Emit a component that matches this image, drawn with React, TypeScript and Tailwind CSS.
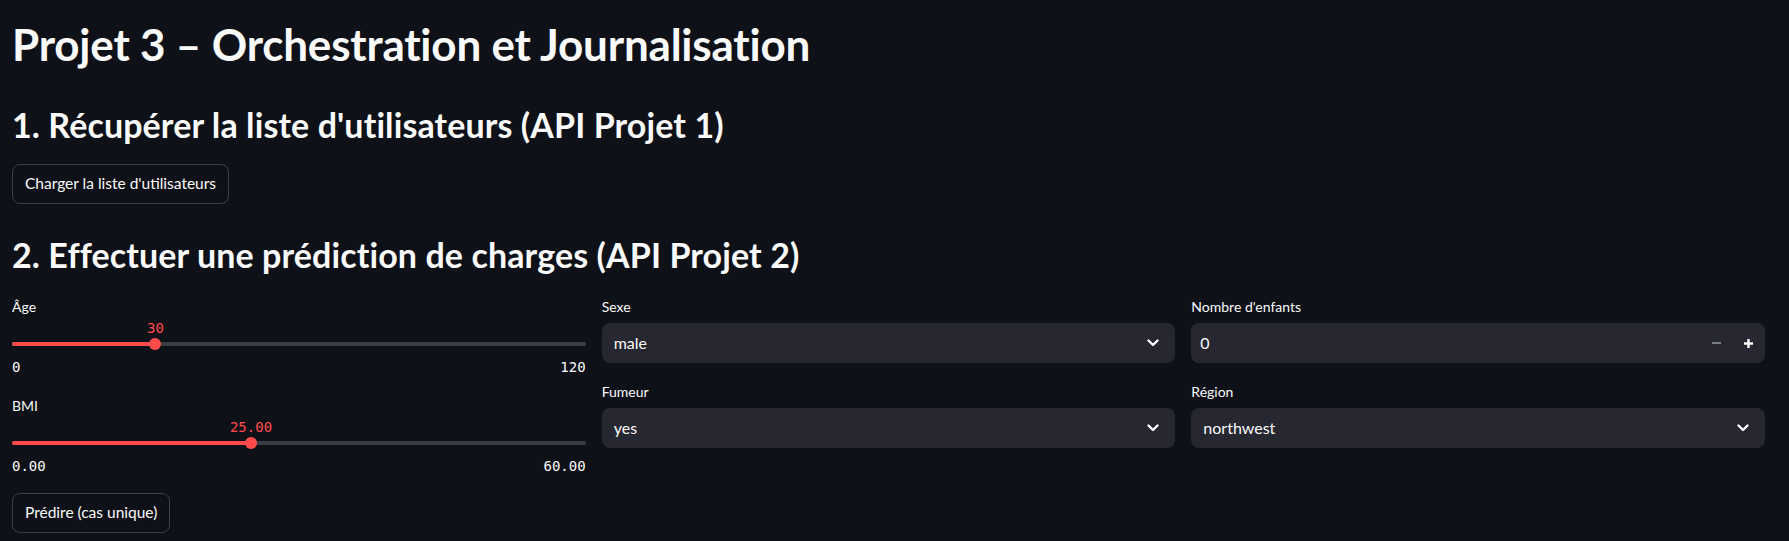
import React from 'react';

function Chevron() {
  return (
    <svg width="12" height="8" viewBox="0 0 12 8" fill="none" className="shrink-0">
      <path d="M1.5 1.5L6 6L10.5 1.5" stroke="#fafafa" strokeWidth="2.4" strokeLinecap="round" strokeLinejoin="round" />
    </svg>
  );
}

function Slider({
  label,
  value,
  min,
  max,
  digits,
}: {
  label: string;
  value: number;
  min: number;
  max: number;
  digits: number;
}) {
  const pct = ((value - min) / (max - min)) * 100;
  return (
    <div>
      <div className="h-5 text-sm leading-5">{label}</div>
      <div className="relative h-[39px]">
        <div className="absolute left-0 right-0 top-[25px] h-1 rounded-full bg-[#3b3d45]" />
        <div className="absolute left-0 top-[25px] h-1 rounded-full bg-[#ff4b4b]" style={{ width: `${pct}%` }} />
        <div
          className="absolute top-[21px] h-3 w-3 -translate-x-1/2 rounded-full bg-[#ff4b4b]"
          style={{ left: `${pct}%` }}
        />
        <div
          className="absolute top-[3px] -translate-x-1/2 font-['DejaVu_Sans_Mono',monospace] text-sm leading-4 text-[#ff4b4b]"
          style={{ left: `${pct}%` }}
        >
          {value.toFixed(digits)}
        </div>
      </div>
      <div className="mt-[3px] flex justify-between font-['DejaVu_Sans_Mono',monospace] text-sm leading-4 text-[#fafafa]">
        <span>{min.toFixed(digits)}</span>
        <span>{max.toFixed(digits)}</span>
      </div>
    </div>
  );
}

function Select({ label, value, className = '' }: { label: string; value: string; className?: string }) {
  return (
    <div className={className}>
      <div className="h-5 text-sm leading-5">{label}</div>
      <div className="mt-[6px] flex h-10 items-center justify-between rounded-lg bg-[#262730] pl-3 pr-4">
        <span className="text-base">{value}</span>
        <Chevron />
      </div>
    </div>
  );
}

function Button({ children }: { children: React.ReactNode }) {
  return (
    <button
      type="button"
      className="inline-flex h-10 items-center rounded-lg border border-[#3d3f46] bg-[#0e1117] px-3 text-[15.5px] text-[#fafafa]"
    >
      {children}
    </button>
  );
}

export default function App() {
  return (
    <div className="min-h-screen bg-[#0e1117] pl-3 pr-6 font-['Lato','Noto_Sans',sans-serif] text-[#fafafa]">
      <h1 className="pt-[18px] text-[44px] font-bold leading-[53px] tracking-[-0.2px]">
        Projet 3 – Orchestration et Journalisation
      </h1>

      <h2 className="mt-[33px] text-[34px] font-bold leading-[41px] tracking-[0.1px]">
        1. Récupérer la liste d'utilisateurs (API Projet 1)
      </h2>
      <div className="mt-[19px]">
        <Button>Charger la liste d'utilisateurs</Button>
      </div>

      <h2 className="mt-[30px] text-[34px] font-bold leading-[41px] tracking-[0.1px]">
        2. Effectuer une prédiction de charges (API Projet 2)
      </h2>

      <div className="mt-[22px] grid grid-cols-3 gap-4">
        <div>
          <Slider label="Âge" value={30} min={0} max={120} digits={0} />
          <div className="mt-[21px]">
            <Slider label="BMI" value={25} min={0} max={60} digits={2} />
          </div>
          <div className="mt-[19px]">
            <Button>Prédire (cas unique)</Button>
          </div>
        </div>

        <div>
          <Select label="Sexe" value="male" />
          <Select label="Fumeur" value="yes" className="mt-[19px]" />
        </div>

        <div>
          <div className="h-5 text-sm leading-5">Nombre d'enfants</div>
          <div className="mt-[6px] flex h-10 items-center rounded-lg bg-[#262730] pl-[9px] pr-[1px]">
            <span className="flex-1 text-base">0</span>
            <span className="flex w-8 justify-center">
              <span className="block h-[2px] w-[9px] bg-[#7b7d85]" />
            </span>
            <span className="flex w-8 justify-center">
              <svg width="11" height="11" viewBox="0 0 11 11">
                <path d="M5.5 1v9M1 5.5h9" stroke="#fafafa" strokeWidth="2.4" />
              </svg>
            </span>
          </div>
          <Select label="Région" value="northwest" className="mt-[19px]" />
        </div>
      </div>
    </div>
  );
}
